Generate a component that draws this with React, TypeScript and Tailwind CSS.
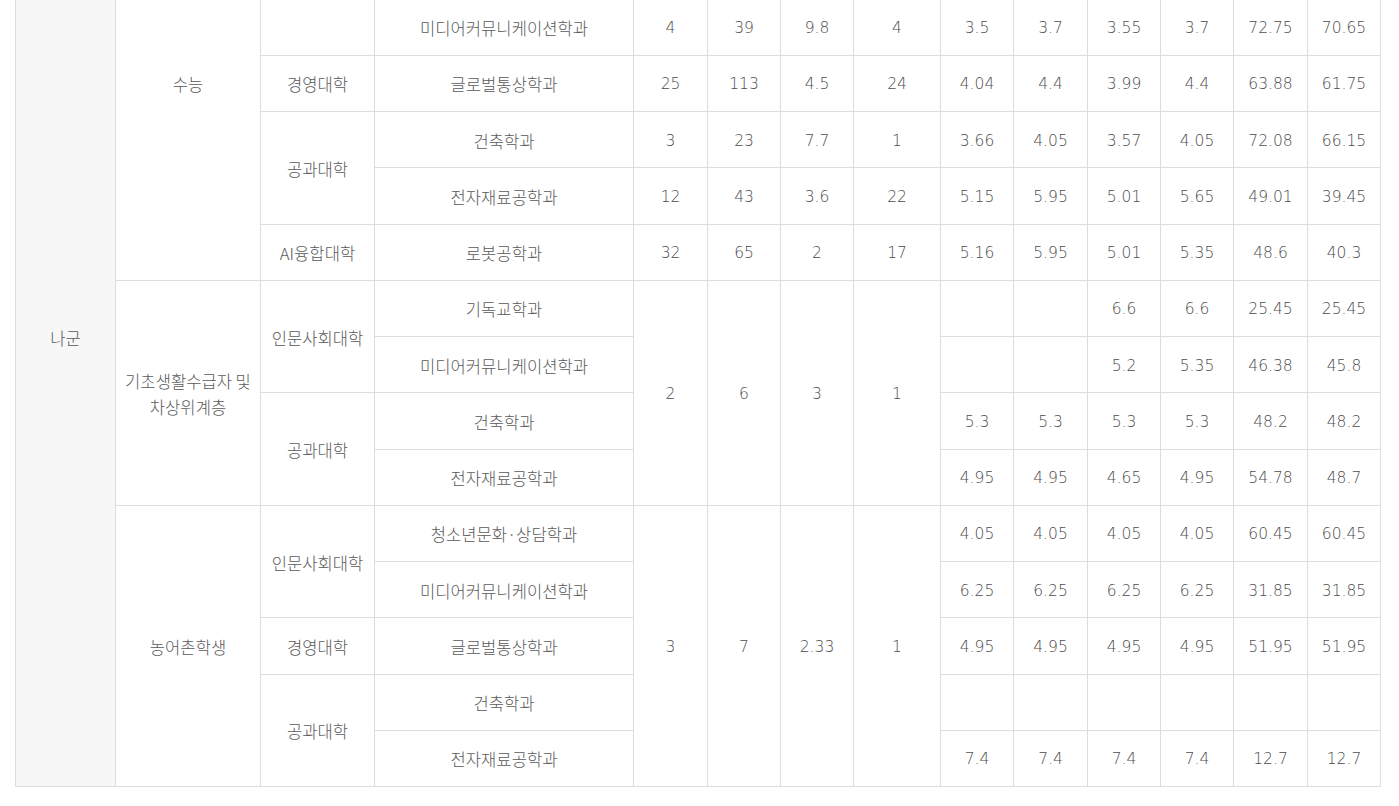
import React from "react";

const td = "border border-[#dddddd] text-center align-middle p-0 pt-[2px]";
const ko = td + " text-[16.6px] text-[#5a5a5a] font-light font-['Noto_Sans_CJK_KR','Noto_Sans',sans-serif]";
const num = td + " text-[15.5px] text-[#4d4d4d] font-light font-['DejaVu_Sans','Noto_Sans_CJK_KR',sans-serif]";

function Nums({ v }: { v: string[] }) {
  return (
    <>
      {v.map((x, i) => (
        <td key={i} className={num}>
          {x}
        </td>
      ))}
    </>
  );
}

const widths = [100, 145, 114, 259, 74, 73, 73, 87, 73, 74, 73, 73, 74, 73];
const blank = ["", "", "", "", "", "", "", "", "", ""];

export default function App() {
  return (
    <div className="w-[1399px] h-[806px] overflow-hidden bg-white">
      <table className="table-fixed border-collapse w-[1366px] ml-[15px] mt-[-114px] leading-[26px]">
        <colgroup>
          {widths.map((w, i) => (
            <col key={i} style={{ width: w }} />
          ))}
        </colgroup>
        <tbody>
          <tr className="h-[56.25px]">
            <td rowSpan={16} className={ko + " bg-[#f7f7f7]"}>나군</td>
            <td rowSpan={7} className={ko}>수능</td>
            <td rowSpan={3} className={ko}></td>
            <td className={ko}></td>
            <Nums v={blank} />
          </tr>
          <tr className="h-[56.25px]">
            <td className={ko}></td>
            <Nums v={blank} />
          </tr>
          <tr className="h-[56.25px]">
            <td className={ko}>미디어커뮤니케이션학과</td>
            <Nums v={["4", "39", "9.8", "4", "3.5", "3.7", "3.55", "3.7", "72.75", "70.65"]} />
          </tr>
          <tr className="h-[56.25px]">
            <td className={ko}>경영대학</td>
            <td className={ko}>글로벌통상학과</td>
            <Nums v={["25", "113", "4.5", "24", "4.04", "4.4", "3.99", "4.4", "63.88", "61.75"]} />
          </tr>
          <tr className="h-[56.25px]">
            <td rowSpan={2} className={ko}>공과대학</td>
            <td className={ko}>건축학과</td>
            <Nums v={["3", "23", "7.7", "1", "3.66", "4.05", "3.57", "4.05", "72.08", "66.15"]} />
          </tr>
          <tr className="h-[56.25px]">
            <td className={ko}>전자재료공학과</td>
            <Nums v={["12", "43", "3.6", "22", "5.15", "5.95", "5.01", "5.65", "49.01", "39.45"]} />
          </tr>
          <tr className="h-[56.25px]">
            <td className={ko}>AI융합대학</td>
            <td className={ko}>로봇공학과</td>
            <Nums v={["32", "65", "2", "17", "5.16", "5.95", "5.01", "5.35", "48.6", "40.3"]} />
          </tr>
          <tr className="h-[56.25px]">
            <td rowSpan={4} className={ko}>
              기초생활수급자 및<br />차상위계층
            </td>
            <td rowSpan={2} className={ko}>인문사회대학</td>
            <td className={ko}>기독교학과</td>
            <td rowSpan={4} className={num}>2</td>
            <td rowSpan={4} className={num}>6</td>
            <td rowSpan={4} className={num}>3</td>
            <td rowSpan={4} className={num}>1</td>
            <Nums v={["", "", "6.6", "6.6", "25.45", "25.45"]} />
          </tr>
          <tr className="h-[56.25px]">
            <td className={ko}>미디어커뮤니케이션학과</td>
            <Nums v={["", "", "5.2", "5.35", "46.38", "45.8"]} />
          </tr>
          <tr className="h-[56.25px]">
            <td rowSpan={2} className={ko}>공과대학</td>
            <td className={ko}>건축학과</td>
            <Nums v={["5.3", "5.3", "5.3", "5.3", "48.2", "48.2"]} />
          </tr>
          <tr className="h-[56.25px]">
            <td className={ko}>전자재료공학과</td>
            <Nums v={["4.95", "4.95", "4.65", "4.95", "54.78", "48.7"]} />
          </tr>
          <tr className="h-[56.25px]">
            <td rowSpan={5} className={ko}>농어촌학생</td>
            <td rowSpan={2} className={ko}>인문사회대학</td>
            <td className={ko}>청소년문화·상담학과</td>
            <td rowSpan={5} className={num}>3</td>
            <td rowSpan={5} className={num}>7</td>
            <td rowSpan={5} className={num}>2.33</td>
            <td rowSpan={5} className={num}>1</td>
            <Nums v={["4.05", "4.05", "4.05", "4.05", "60.45", "60.45"]} />
          </tr>
          <tr className="h-[56.25px]">
            <td className={ko}>미디어커뮤니케이션학과</td>
            <Nums v={["6.25", "6.25", "6.25", "6.25", "31.85", "31.85"]} />
          </tr>
          <tr className="h-[56.25px]">
            <td className={ko}>경영대학</td>
            <td className={ko}>글로벌통상학과</td>
            <Nums v={["4.95", "4.95", "4.95", "4.95", "51.95", "51.95"]} />
          </tr>
          <tr className="h-[56.25px]">
            <td rowSpan={2} className={ko}>공과대학</td>
            <td className={ko}>건축학과</td>
            <Nums v={["", "", "", "", "", ""]} />
          </tr>
          <tr className="h-[56.25px]">
            <td className={ko}>전자재료공학과</td>
            <Nums v={["7.4", "7.4", "7.4", "7.4", "12.7", "12.7"]} />
          </tr>
        </tbody>
      </table>
    </div>
  );
}
